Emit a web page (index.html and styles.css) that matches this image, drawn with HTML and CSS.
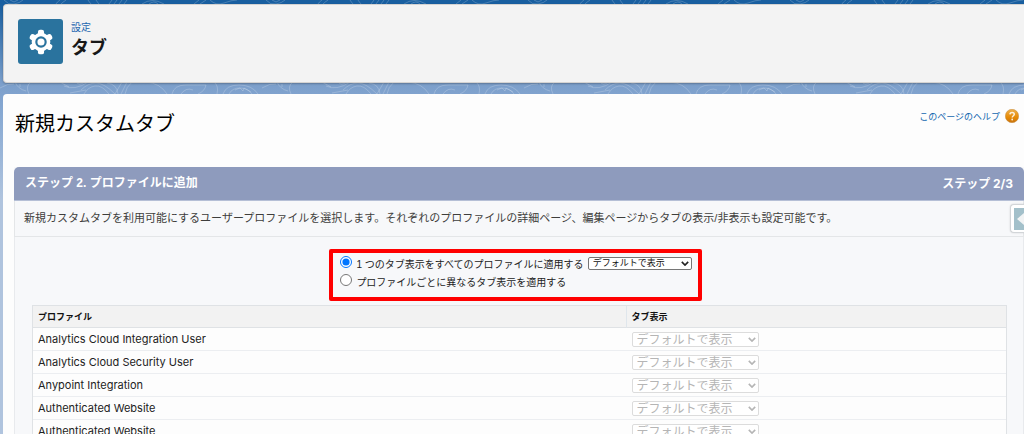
FILE: index.html
```html
<!DOCTYPE html>
<html lang="ja">
<head>
<meta charset="utf-8">
<title>新規カスタムタブ</title>
<link rel="stylesheet" href="styles.css">
</head>
<body>
<svg class="backdrop" aria-hidden="true">
  <defs>
    <pattern id="contours" width="262" height="434" patternUnits="userSpaceOnUse">
      <g fill="none" stroke="#fff" stroke-opacity=".2">
        <path d="M4 0q4 5 10 4t9-4M10 0l4 2 4-2M60 0q-3 2-4 4M66 0q-3 2-5 4M88 0q2 3 3 4M96 0q2 3 3 4M109 4l3-4M114 4l3-4M119 4l3-4M124 4l3-4M142 4q10-7 22 0M149 4q5-4 9 0M194 4l5-4M200 4l6-4M210 0q6 6 14 3t13-3"/>
        <path d="M0 88q8-5 14-4M15 82q3 7 11 9M20 84v3M29 94q-4-8 2-12M81 90q7-7 15-7t19 11M84 94q4-7 11-8t14 8M118 94q-1-10-11-11M122 82l-7 12M127 82l-6 12M132 82q-6 5-7 12M146 82q14 1 21 12M172 94q2-9 14-9t20 0q-1 6-8 9M181 94q5-7 12-4M214 82q5 4 3 12M223 94q3-9 16-9t19 9M229 94q3-6 11-6t12 6M235 90l5-2 3 3 1-3 7 4M60 82l9 5M64 86q11 5 24-4M70 93l16-3M76 82q3 4 9 0"/>
      </g>
    </pattern>
  </defs>
  <rect width="100%" height="100%" fill="url(#contours)"/>
</svg>
<div class="page">
  <header class="page-header">
    <span class="header-icon">
      <svg viewBox="0 0 24 24" width="26" height="26" aria-hidden="true">
        <g fill="#fff">
          <circle cx="12" cy="12" r="8.6"/>
          <rect x="9.2" y="0.6" width="5.6" height="22.8" rx="2"/>
          <rect x="9.2" y="0.6" width="5.6" height="22.8" rx="2" transform="rotate(60 12 12)"/>
          <rect x="9.2" y="0.6" width="5.6" height="22.8" rx="2" transform="rotate(120 12 12)"/>
        </g>
        <circle cx="12" cy="12" r="4.3" fill="none" stroke="#2a739e" stroke-width="2"/>
      </svg>
    </span>
    <div>
      <p class="eyebrow">設定</p>
      <h1 class="header-title">タブ</h1>
    </div>
  </header>
  <main class="content">
    <div class="title-row">
      <h2 class="title">新規カスタムタブ</h2>
      <a class="help" href="#">このページのヘルプ
        <svg viewBox="0 0 14 14" width="14" height="14" aria-hidden="true">
          <defs><linearGradient id="orange" x1="0" y1="0" x2="0" y2="1"><stop stop-color="#edb04c"/><stop offset=".6" stop-color="#e68a05"/><stop offset="1" stop-color="#c87410"/></linearGradient></defs>
          <circle cx="7" cy="7" r="6.7" fill="url(#orange)" stroke="#c58b3c" stroke-width=".5"/>
          <path d="M4.9 5.4C5 3.9 6 3.4 7.1 3.4s2.2.7 2.2 1.9C9.3 6.7 7.2 6.8 7.2 8.6" fill="none" stroke="#fff" stroke-opacity=".85" stroke-width="1.5"/>
          <circle cx="7.2" cy="10.5" r=".9" fill="#fff" fill-opacity=".85"/>
        </svg>
      </a>
    </div>
    <section class="step">
      <div class="step-head"><h3>ステップ 2. プロファイルに追加</h3><span class="step-count">ステップ 2/3</span></div>
      <p class="step-desc">新規カスタムタブを利用可能にするユーザープロファイルを選択します。それぞれのプロファイルの詳細ページ、編集ページからタブの表示/非表示も設定可能です。</p>
      <button class="drawer" aria-label="サイドバーを開く"><svg viewBox="0 0 10 22" width="10" height="22" aria-hidden="true"><rect width="10" height="22" fill="#a3c0ca"/><path d="M10 5v12L3 11z" fill="#f1f3f4"/></svg></button>
      <div class="step-body">
        <div class="options">
          <div class="option">
            <input type="radio" name="mode" id="all" checked>
            <label for="all">1 つのタブ表示をすべてのプロファイルに適用する</label>
            <span class="pick"><select aria-label="タブ表示"><option>デフォルトで表示</option></select><svg viewBox="0 0 10 6" aria-hidden="true"><path d="M1 1l4 4 4-4"/></svg></span>
          </div>
          <div class="option">
            <input type="radio" name="mode" id="each">
            <label for="each">プロファイルごとに異なるタブ表示を適用する</label>
          </div>
        </div>
        <table class="profiles">
          <thead><tr><th class="name-col">プロファイル</th><th>タブ表示</th></tr></thead>
          <tbody>
            <tr><td>Analytics Cloud Integration User</td><td><span class="pick large"><select disabled aria-label="Analytics Cloud Integration User"><option>デフォルトで表示</option></select><svg viewBox="0 0 10 6" aria-hidden="true"><path d="M1 1l4 4 4-4"/></svg></span></td></tr>
            <tr><td>Analytics Cloud Security User</td><td><span class="pick large"><select disabled aria-label="Analytics Cloud Security User"><option>デフォルトで表示</option></select><svg viewBox="0 0 10 6" aria-hidden="true"><path d="M1 1l4 4 4-4"/></svg></span></td></tr>
            <tr><td>Anypoint Integration</td><td><span class="pick large"><select disabled aria-label="Anypoint Integration"><option>デフォルトで表示</option></select><svg viewBox="0 0 10 6" aria-hidden="true"><path d="M1 1l4 4 4-4"/></svg></span></td></tr>
            <tr><td>Authenticated Website</td><td><span class="pick large"><select disabled aria-label="Authenticated Website"><option>デフォルトで表示</option></select><svg viewBox="0 0 10 6" aria-hidden="true"><path d="M1 1l4 4 4-4"/></svg></span></td></tr>
            <tr><td>Authenticated Website</td><td><span class="pick large"><select disabled aria-label="Authenticated Website"><option>デフォルトで表示</option></select><svg viewBox="0 0 10 6" aria-hidden="true"><path d="M1 1l4 4 4-4"/></svg></span></td></tr>
          </tbody>
        </table>
      </div>
    </section>
  </main>
</div>
</body>
</html>
```
FILE: styles.css
```css
* { box-sizing: border-box; }
body {
  margin: 0;
  height: 100vh;
  overflow: hidden;
  color: #222;
  font-family: "Liberation Sans", "Noto Sans CJK JP", sans-serif;
  background: linear-gradient(#195fa0 0, #195fa0 4px, #7c9fcb 84px, #86a8d2 110px, #b0c4de 200px);
}
h1, h2, h3, p { margin: 0; }
.backdrop { position: absolute; inset: 0; width: 100%; height: 100%; }
.page {
  position: relative;
  display: flex;
  flex-direction: column;
  gap: 11px;
  min-height: 100%;
  padding: 4px 0 0 3px;
}
.page-header {
  display: flex;
  align-items: flex-start;
  gap: 8px;
  padding: 14px 14px 18px;
  background: #f3f3f3;
  border: 1px solid #d5d3d1;
  border-right: 0;
  border-radius: 4px 0 0 4px;
  box-shadow: 0 1px 2px rgba(0, 0, 0, .25);
}
.header-icon {
  display: grid;
  place-items: center;
  width: 45px;
  height: 45px;
  border-radius: 3px;
  background: #2a739e;
}
.eyebrow { font-size: 10px; line-height: 18px; color: #1d66b0; }
.header-title { font-size: 18px; line-height: 22px; color: #181818; }
.content {
  flex: 1;
  padding: 18px 0 0 11px;
  background: #fdfdfd;
  border-radius: 4px 0 0 0;
}
.title-row {
  display: flex;
  justify-content: space-between;
  align-items: flex-start;
  padding: 0 5px 0 1px;
  margin-bottom: 31px;
}
.title { font-size: 20px; line-height: 24px; font-weight: 400; color: #000; }
.help {
  display: flex;
  align-items: center;
  gap: 5px;
  margin-top: -3px;
  font-size: 9px;
  color: #1468b0;
  text-decoration: none;
}
.step { position: relative; background: #f7f8fa; }
.step-head {
  display: flex;
  justify-content: space-between;
  padding: 0 11px;
  color: #fff;
  font-size: 12px;
  font-weight: 700;
  line-height: 33px;
  background: #8e9bbd;
  border-bottom: 1px solid #b5bfd6;
  border-radius: 5px 5px 0 0;
}
.step-head h3 { font-size: 12px; }
.step-count { font-family: Inter, "Noto Sans CJK JP", sans-serif; }
.step-desc {
  padding: 0 9px;
  font-size: 11px;
  line-height: 35px;
  color: #3e3e3c;
  border: 1px solid #e4e6e8;
  border-width: 0 1px 1px;
}
.drawer {
  position: absolute;
  top: 37px;
  right: 0;
  display: grid;
  place-items: center end;
  width: 14px;
  height: 29px;
  padding: 0;
  background: #fff;
  border: 1px solid #d2d5d8;
  border-right: 0;
  border-radius: 4px 0 0 4px;
  box-shadow: 0 0 2px rgba(0, 0, 0, .15);
}
.step-body {
  display: flex;
  flex-direction: column;
  align-items: center;
  gap: 4px;
  padding: 12px 16px 20px 17px;
  border: 1px solid #e8eaed;
  border-width: 0 1px;
}
.options {
  margin-right: 8px;
  padding: 1px 6px 7px 7px;
  border: 4px solid #f00;
  border-radius: 2px;
}
.option {
  display: flex;
  align-items: center;
  gap: 4px;
  height: 18px;
  font-size: 10px;
}
.option input { width: 12px; height: 12px; margin: 0 0 2px; accent-color: #0075ff; }
.pick { position: relative; display: flex; width: 104px; }
.pick select {
  appearance: none;
  width: 100%;
  height: 13px;
  padding: 0 4px;
  font-family: inherit;
  font-size: 9px;
  line-height: 11px;
  color: #111;
  background: #fff;
  border: 1px solid #767676;
  border-radius: 2px;
}
.pick svg {
  position: absolute;
  top: 4px;
  right: 3px;
  width: 8px;
  height: 5px;
  fill: none;
  stroke: #222;
  stroke-width: 2;
  pointer-events: none;
}
.pick.large { width: 127px; }
.pick.large select {
  height: 15px;
  font-size: 12px;
  line-height: 13px;
  color: #b5b5b5;
  border-color: #dcdcdc;
  opacity: 1;
}
.pick.large svg { top: 5px; stroke: #b5b5b5; }
.profiles {
  width: 100%;
  border: 1px solid #dfe2e5;
  border-spacing: 0;
  background: #fdfdfd;
}
.profiles th {
  height: 22px;
  padding: 0 5px;
  font-size: 9px;
  text-align: left;
  color: #111;
  background: #f2f2f2;
  border-bottom: 1px solid #dfe2e5;
}
.profiles .name-col { width: 61%; border-right: 1px solid #dfe6ec; }
.profiles td {
  height: 23px;
  padding: 0 5px;
  font-family: Inter, "Noto Sans CJK JP", sans-serif;
  font-size: 11px;
  color: #222;
  border-bottom: 1px solid #eceef1;
}
```
